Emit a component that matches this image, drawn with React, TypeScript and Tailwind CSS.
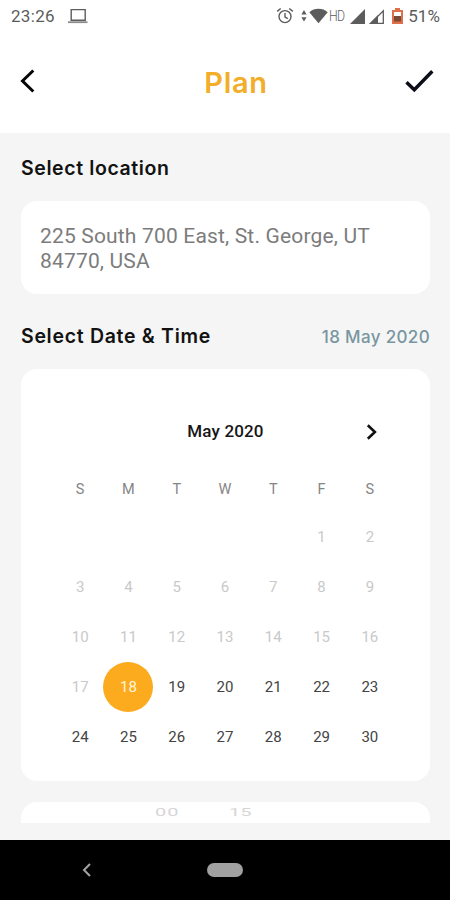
import { useState } from "react";
import clsx from "clsx";

const WEEKDAYS = ["S", "M", "T", "W", "T", "F", "S"];
const FIRST_DAY_OFFSET = 5;
const TODAY = 18;
const days = Array.from({ length: 30 }, (_, i) => i + 1);

function StatusBar() {
  return (
    <div className="flex h-8 items-center justify-between pl-[11px] pr-[10px] text-[#5c5c5c]">
      <div className="flex items-center">
        <span className="w-[57px] text-[17px] leading-8 tracking-[0.3px]">23:26</span>
        <svg width="20" height="16" viewBox="0 0 20 16" fill="none" stroke="currentColor">
          <path d="M3.2 1.6h14v10.6h-14z" strokeWidth="1.4" />
          <path d="M0 14.2h19.5" strokeWidth="1.8" stroke="#8a8a8a" />
        </svg>
      </div>
      <div className="flex items-center">
        <svg width="18" height="18" viewBox="0 0 18 18" fill="none" stroke="currentColor" strokeWidth="1.4">
          <circle cx="9" cy="9.6" r="6" />
          <path d="M9 6v4l2.8 1.6M1.2 4.4l3.5-2.9M16.8 4.4l-3.5-2.9" />
        </svg>
        <svg width="6" height="14" viewBox="0 0 6 14" fill="currentColor" className="ml-[7px]">
          <path d="M3 1l2.6 4.4H.4zM3 12.6L.4 8.2h5.2z" />
        </svg>
        <svg width="19" height="16" viewBox="0 0 19 16" fill="currentColor" className="ml-[2px]">
          <path d="M9.5 15.2L.3 4.3C5-.3 14-.3 18.7 4.3z" />
        </svg>
        <span className="ml-[1px] w-[21px] text-[15px] font-light leading-8 tracking-[-0.8px]">
          <span className="inline-block origin-left scale-x-[0.82]">HD</span>
        </span>
        <svg width="15" height="15" viewBox="0 0 15 15" fill="currentColor">
          <path d="M15 0v15H0z" />
        </svg>
        <svg width="15" height="15" viewBox="0 0 15 15" fill="none" className="ml-[4px]">
          <path d="M9 6v9H0z" fill="currentColor" />
          <path d="M14.3 1.8v12.5H1.8z" stroke="currentColor" strokeWidth="1.3" />
        </svg>
        <svg width="11" height="16" viewBox="0 0 11 16" className="ml-[8px]">
          <path d="M3 0h5v2h3v14H0V2h3z" fill="#e0704c" />
          <path d="M2 4h7v4H2z" fill="#fff" />
          <path d="M2 8h7v5.5H2z" fill="#7a4938" />
        </svg>
        <span className="ml-[5px] text-[17px] leading-8 tracking-[0.1px]">51%</span>
      </div>
    </div>
  );
}

function Header() {
  return (
    <header className="flex h-[101px] items-center justify-between pl-5 pr-4">
      <button type="button" aria-label="Back" className="-mt-[3px]">
        <svg width="15" height="24" viewBox="0 0 15 24" fill="none" stroke="#050505" strokeWidth="3">
          <path d="M13.3 1.5L2.5 12l10.8 10.5" />
        </svg>
      </button>
      <h1 className="pl-[32px] pt-[1px] font-['Inter',sans-serif] text-[29px] font-semibold leading-9 tracking-[0.7px] text-[#f2ad29]">
        Plan
      </h1>
      <button type="button" aria-label="Save" className="-mt-[3px]">
        <svg width="29" height="24" viewBox="0 0 29 24" fill="none" stroke="#0b0d18" strokeWidth="3.4">
          <path d="M1.5 13.2l7.8 7.6L27.3 2.2" />
        </svg>
      </button>
    </header>
  );
}

function Calendar() {
  const [selected, setSelected] = useState(18);

  return (
    <section className="mt-[18px] h-[412px] rounded-[16px] bg-white pl-[35px] pr-[36px] pt-[45px]">
      <div className="grid h-9 grid-cols-7 items-center">
        <h3 className="col-span-5 col-start-2 pl-[1px] text-center text-[17px] font-medium tracking-[0.15px] text-[#161616]">
          May 2020
        </h3>
        <button type="button" aria-label="Next month" className="flex justify-center pl-[3px]">
          <svg width="11" height="16" viewBox="0 0 11 16" fill="none" stroke="#111" strokeWidth="2.6">
            <path d="M1.8 1.2L8.9 8l-7.1 6.8" />
          </svg>
        </button>
      </div>
      <div className="mt-[27px] grid h-[26px] grid-cols-7 items-center text-center text-[14.5px] text-[#858585]">
        {WEEKDAYS.map((day, i) => (
          <span key={i}>{day}</span>
        ))}
      </div>
      <div className="mt-[9px] grid auto-rows-[50px] grid-cols-7 text-[15px]">
        {Array.from({ length: FIRST_DAY_OFFSET }, (_, i) => (
          <span key={i} />
        ))}
        {days.map((day) => (
          <button
            key={day}
            type="button"
            disabled={day < TODAY}
            onClick={() => setSelected(day)}
            className="flex items-center justify-center"
          >
            <span
              className={clsx(
                "-mx-1 flex size-[50px] shrink-0 items-center justify-center rounded-full",
                day === selected && "bg-[#fcab1e] text-[#fff6dc]",
                day !== selected && (day < TODAY ? "text-[#c9c9c9]" : "text-[#434343]")
              )}
            >
              {day}
            </span>
          </button>
        ))}
      </div>
    </section>
  );
}

export default function App() {
  return (
    <div className="flex h-[900px] w-[450px] flex-col overflow-hidden bg-white font-['Roboto',sans-serif]">
      <StatusBar />
      <Header />
      <main className="flex h-[707px] flex-col bg-[#f5f5f5] pl-[21px] pr-[20px] pt-[21px]">
        <h2 className="font-['Inter',sans-serif] text-[19.5px] font-semibold leading-[28px] tracking-[0.6px] text-[#121212]">
          Select location
        </h2>
        <div className="mt-[19px] h-[93px] rounded-[16px] bg-white px-[19px] pt-[23px] text-[21px] leading-[25px] tracking-[0.17px] text-[#7c7c7c]">
          225 South 700 East, St. George, UT
          <br />
          84770, USA
        </div>
        <div className="mt-[29px] flex h-[28px] items-center justify-between">
          <h2 className="font-['Inter',sans-serif] text-[19.5px] font-semibold tracking-[0.7px] text-[#121212]">
            Select Date &amp; Time
          </h2>
          <span className="pt-[2px] font-['Inter',sans-serif] text-[17px] font-medium tracking-[0.35px] text-[#7896a0]">
            18 May 2020
          </span>
        </div>
        <Calendar />
        {/* top edge of the time wheel */}
        <section className="mt-[21px] h-[21px] overflow-hidden rounded-t-[16px] bg-white">
          <div className="flex pl-[134px] pt-[4px] text-[20px] leading-[12px] text-[#d6d6d6]">
            <span className="w-[74px] origin-center scale-y-50 tracking-[1px]">00</span>
            <span className="origin-center scale-y-50">15</span>
          </div>
        </section>
      </main>
      <nav className="grid h-[60px] grid-cols-[174px_102px_174px] items-center bg-black">
        <button type="button" aria-label="System back" className="flex justify-center">
          <svg width="10" height="14" viewBox="0 0 10 14" fill="none" stroke="#a3a3a3" strokeWidth="2">
            <path d="M8 1L2 7l6 6" />
          </svg>
        </button>
        <span className="mx-auto h-[14px] w-[36px] rounded-full bg-[#a0a0a0]" />
      </nav>
    </div>
  );
}
